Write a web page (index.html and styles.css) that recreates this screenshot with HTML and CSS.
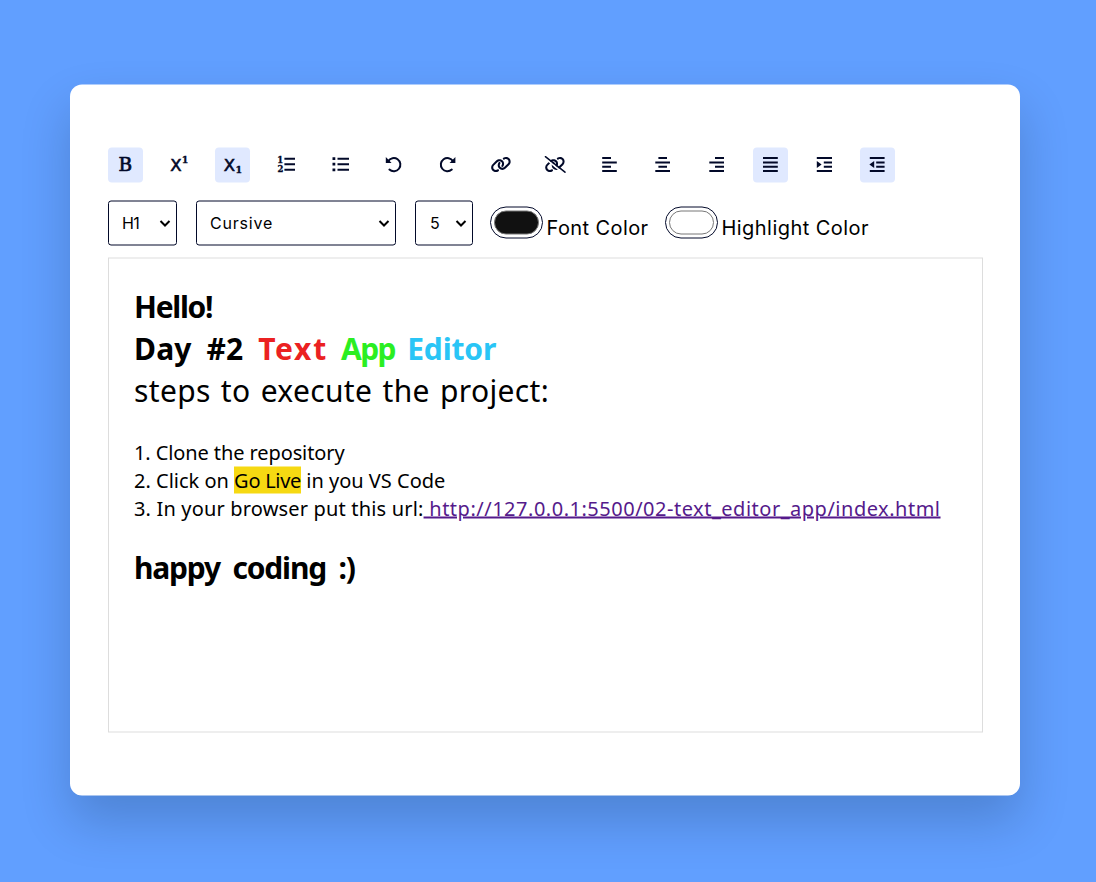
FILE: index.html
```html
<!DOCTYPE html>
<html lang="en">
<head>
<meta charset="utf-8">
<title>Text Editor</title>
<link rel="stylesheet" href="styles.css">
</head>
<body>
<main class="card">
  <div class="tools">
    <button class="tool active"><svg viewBox="0 0 35 35"><text class="slab" x="10.5" y="23.8" font-size="18.5">B</text></svg></button>
    <button class="tool"><svg viewBox="0 0 35 35"><text class="ex" x="8.3" y="23" font-size="16.5">X</text><text class="num" x="19.8" y="15.3" font-size="9.5">1</text></svg></button>
    <button class="tool active"><svg viewBox="0 0 35 35"><text class="ex" x="8.7" y="23" font-size="16.5">X</text><text class="num" x="20.4" y="25.3" font-size="9.5">1</text></svg></button>
    <button class="tool"><svg viewBox="0 0 35 35"><path class="line" d="M15.4 11.2H26M15.4 16.7H26M15.4 22.2H26"/><text class="num" x="8.2" y="15.4" font-size="8.5">1</text><text class="num" x="8.4" y="24.6" font-size="8.5">2</text></svg></button>
    <button class="tool"><svg viewBox="0 0 35 35"><path class="line" d="M14.5 11.2H26M14.5 16.7H26M14.5 22.2H26"/><path d="M9.5 9.7h2.8v2.8H9.5zM9.5 15.3h2.8v2.8H9.5zM9.5 20.9h2.8v2.8H9.5z"/></svg></button>
    <button class="tool"><svg viewBox="0 0 35 35"><path class="arc" d="M11.2 13.6A6.6 6.6 0 1 1 12.4 22.1"/><path d="M8.8 9.6V15.4H14.6z"/></svg></button>
    <button class="tool"><svg viewBox="0 0 35 35"><g transform="matrix(-1 0 0 1 34.2 0)"><path class="arc" d="M11.2 13.6A6.6 6.6 0 1 1 12.4 22.1"/><path d="M8.8 9.6V15.4H14.6z"/></g></svg></button>
    <button class="tool"><svg viewBox="0 0 35 35"><path id="chain" transform="translate(6.6 8.8) scale(.0322)" d="M579.8 267.7c56.5-56.5 56.5-148 0-204.5c-50-50-128.8-56.5-186.3-15.4l-1.6 1.1c-14.4 10.3-17.7 30.3-7.4 44.6s30.3 17.7 44.6 7.4l1.6-1.1c32.1-22.9 76-19.3 103.8 8.6c31.5 31.5 31.5 82.5 0 114L422.3 334.8c-31.5 31.5-82.5 31.5-114 0c-27.9-27.9-31.5-71.8-8.6-103.8l1.1-1.6c10.3-14.4 6.9-34.4-7.4-44.6s-34.4-6.9-44.6 7.4l-1.1 1.6C206.5 251.2 213 330 263 380c56.5 56.5 148 56.5 204.5 0L579.8 267.7zM60.2 244.3c-56.5 56.5-56.5 148 0 204.5c50 50 128.8 56.5 186.3 15.4l1.6-1.1c14.4-10.3 17.7-30.3 7.4-44.6s-30.3-17.7-44.6-7.4l-1.6 1.1c-32.1 22.9-76 19.3-103.8-8.6C74 372 74 321 105.5 289.5L217.7 177.2c31.5-31.5 82.5-31.5 114 0c27.9 27.9 31.5 71.8 8.6 103.9l-1.1 1.6c-10.3 14.4-6.9 34.4 7.4 44.6s34.4 6.9 44.6-7.4l1.1-1.6C433.5 260.8 427 182 377 132c-56.5-56.5-148-56.5-204.5 0L60.2 244.3z"/></svg></button>
    <button class="tool"><svg viewBox="0 0 35 35"><use href="#chain"/><path class="gap" d="M7.2 10.9L25.6 25.9"/><path class="slash" d="M7.4 9.2L27 24.7"/></svg></button>
    <button class="tool"><svg viewBox="0 0 35 35"><path class="line" d="M10.2 10.5H19M10.2 15H24.8M10.2 19.2H19M10.2 23.5H24.8"/></svg></button>
    <button class="tool"><svg viewBox="0 0 35 35"><path class="line" d="M13.4 10.5H22M10.3 15H25M13.4 19.2H22M10.3 23.5H25"/></svg></button>
    <button class="tool"><svg viewBox="0 0 35 35"><path class="line" d="M16 10.5H25M10.3 15H25M16 19.2H25M10.3 23.5H25"/></svg></button>
    <button class="tool active"><svg viewBox="0 0 35 35"><path class="line" d="M10 10.5H24.8M10 15H24.8M10 19.2H24.8M10 23.5H24.8"/></svg></button>
    <button class="tool"><svg viewBox="0 0 35 35"><path class="line" d="M9.8 10.5H25M16.8 15H25M16.8 19.2H25M9.8 23.5H25"/><path d="M9.8 13.6V20.4L14.6 17z"/></svg></button>
    <button class="tool active"><svg viewBox="0 0 35 35"><path class="line" d="M9.8 10.5H24.6M16.2 15H24.6M16.2 19.2H24.6M9.8 23.5H24.6"/><path d="M14.2 13.6V20.4L9.4 17z"/></svg></button>
  </div>
  <div class="options">
    <div class="select heading"><span>H1</span><svg class="chev" viewBox="0 0 12 8"><path d="M1.5 1.5L6 6L10.5 1.5"/></svg></div>
    <div class="select family"><span>Cursive</span><svg class="chev" viewBox="0 0 12 8"><path d="M1.5 1.5L6 6L10.5 1.5"/></svg></div>
    <div class="select size"><span>5</span><svg class="chev" viewBox="0 0 12 8"><path d="M1.5 1.5L6 6L10.5 1.5"/></svg></div>
    <div class="color fore"><span class="swatch"><i class="ink"></i></span><label>Font Color</label></div>
    <div class="color back"><span class="swatch"><i></i></span><label>Highlight Color</label></div>
  </div>
  <section class="editor">
    <div class="big bold hello">Hello!</div>
    <div class="big bold"><span class="day">Day #2 </span><span class="red">Text </span><span class="green">App </span><span class="blue">Editor</span></div>
    <div class="big steps">steps to execute the project:</div>
    <div class="list">
      <div class="clone">1. Clone the repository</div>
      <div><span>2. Click on </span><span class="mark">Go Live</span><span> in you VS Code</span></div>
      <div><span class="url">3. In your browser put this url:</span><a> http://127.0.0.1:5500/02-text_editor_app/index.html</a></div>
    </div>
    <div class="big bold happy">happy coding :)</div>
  </section>
</main>
</body>
</html>
```
FILE: styles.css
```css
* { box-sizing: border-box; margin: 0; padding: 0; }
body { height: 882px; background: #619fff; padding: 85px 0 0 70px; font-family: Inter, sans-serif; color: #000; }
.card { width: 950px; height: 711px; padding: 63px 37px 0 38px; background: #fff; border-radius: 12px; box-shadow: 0 25px 50px rgba(7, 20, 35, .2); transform: translateY(-.5px); }

/* Toolbar */
.tools { display: flex; gap: 18.74px; height: 35px; }
.tool { width: 35px; height: 35px; border: 0; border-radius: 4px; background: #fff; flex: none; }
.tool.active { background: #e0e9ff; }
.tool svg { display: block; width: 35px; height: 35px; fill: #020929; }
.slab { font-family: "DejaVu Serif", serif; stroke: #020929; stroke-width: .7; }
.ex { font-family: "DejaVu Sans", sans-serif; stroke: #020929; stroke-width: .6; }
.num { font-family: "DejaVu Serif", serif; font-weight: bold; stroke: #020929; stroke-width: .3; }
.line { stroke: #020929; stroke-width: 2; }
.arc { fill: none; stroke: #020929; stroke-width: 2; stroke-linecap: round; }
.gap { stroke: #fff; stroke-width: 1.8; }
.slash { stroke: #020929; stroke-width: 1.5; stroke-linecap: round; }

/* Selects and colour pickers */
.options { display: flex; margin-top: 18px; height: 45px; }
.select { display: flex; align-items: center; justify-content: space-between; height: 45px; border: 1px solid #020929; border-radius: 3px; font-size: 16px; padding: 0 5px 0 14px; }
.select span { margin-top: -1px; }
.heading { width: 69px; margin-right: 19px; padding-left: 13px; letter-spacing: -.7px; }
.family { width: 200px; margin-right: 19px; padding-left: 13px; letter-spacing: .8px; }
.size { width: 58px; margin-right: 17px; }
.chev { width: 12px; height: 8px; fill: none; stroke: #000; stroke-width: 2; }
.color { display: flex; font-size: 20px; white-space: nowrap; letter-spacing: .4px; }
.fore { width: 175px; }
.back { letter-spacing: .45px; }
.swatch { width: 52.5px; height: 32px; margin: 6px 4px 0 0; padding: 3px; border: 1px solid #020929; border-radius: 16px; }
.swatch i { display: block; height: 24px; border: 1px solid #777; border-radius: 12px; background: #fff; }
.swatch .ink { background: #111; }
.color label { line-height: 24px; margin-top: 15px; }

/* Editing area */
.editor { width: 875px; height: 475px; margin-top: 12px; padding: 27px 25px; border: 1px solid #ddd; font-family: "Noto Sans", sans-serif; font-size: 20px; line-height: 28px; white-space: nowrap; }
.editor span, .editor a { white-space: pre; }
.big { font-size: 30px; line-height: 42px; }
.bold { font-weight: bold; }
.hello { letter-spacing: -1.3px; }
.day { letter-spacing: .2px; word-spacing: 6.8px; }
.red { color: #eb2121; letter-spacing: 1.7px; word-spacing: 3.5px; }
.green { color: #2bee22; letter-spacing: -1.5px; word-spacing: 5.8px; }
.blue { color: #29c5f6; letter-spacing: -.15px; }
.steps { letter-spacing: .35px; word-spacing: 2px; }
.list { margin: 27px 0 24px; }
.clone { letter-spacing: -.1px; }
.mark { background: #f6d912; letter-spacing: -.28px; }
.url { letter-spacing: .17px; }
.editor a { color: #551a8b; text-decoration: underline; letter-spacing: .51px; }
.happy { letter-spacing: -1.2px; word-spacing: 6px; }
```
